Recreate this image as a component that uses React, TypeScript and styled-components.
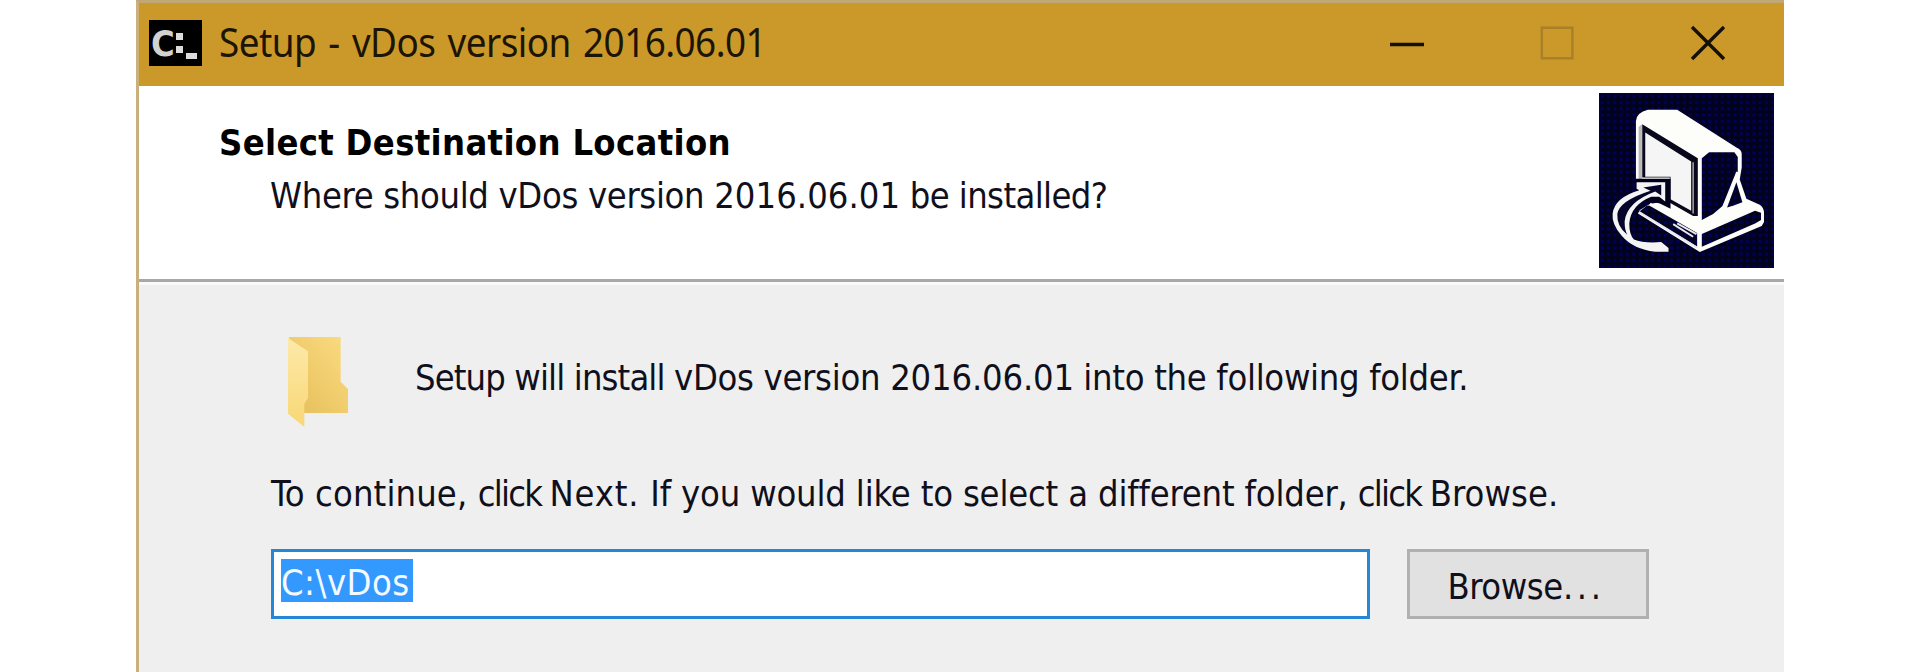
import React from 'react';
import styled, { createGlobalStyle } from 'styled-components';

const GlobalStyle = createGlobalStyle`
  body {
    margin: 0;
    background: #fff;
    color: #10101c;
    font: 36px/42px 'DejaVu Sans Condensed', 'DejaVu Sans', sans-serif;
  }
`;

const Page = styled.main`
  height: 672px;
  padding: 0 136px;
  box-sizing: border-box;
  overflow: hidden;
`;

const Window = styled.section`
  display: flex;
  flex-direction: column;
  height: 672px;
  box-sizing: border-box;
  border-top: 3px solid #bfa873;
  border-left: 3px solid #c9b07c;
`;

const TitleBar = styled.header`
  display: flex;
  align-items: flex-start;
  height: 83px;
  box-sizing: border-box;
  padding: 17px 58px 0 10px;
  background: #cb992a;
`;

const AppIcon = styled.svg`
  display: block;
  flex: none;
  width: 53px;
  height: 46px;
`;

const Title = styled.h1`
  flex: 1;
  margin: -5px 0 0 17px;
  font: 400 40px/54px 'Noto Sans', sans-serif;
  letter-spacing: -0.6px;
  word-spacing: 3.5px;
  color: #1c1404;
  white-space: nowrap;
  transform: scaleX(0.922);
  transform-origin: left;
`;

const WindowControls = styled.div`
  display: flex;
  gap: 114.5px;
  padding-top: 5px;
`;

const ControlIcon = styled.svg`
  display: block;
  width: 36px;
  height: 36px;
  fill: none;
`;

const Banner = styled.div`
  display: flex;
  justify-content: space-between;
  height: 193px;
  padding: 7px 10px 0 80px;
  box-sizing: border-box;
  background: #fff;
`;

const BannerText = styled.div`
  padding-top: 29px;
`;

const Heading = styled.h2`
  margin: 0;
  font-size: 36px;
  font-weight: 700;
  letter-spacing: 0.33px;
  white-space: nowrap;
  color: #000;
`;

const Line = styled.p<{ $track?: number; $indent?: number; $gap?: number }>`
  margin: ${(p) => p.$gap ?? 0}px 0 0 ${(p) => p.$indent ?? 0}px;
  letter-spacing: ${(p) => p.$track ?? 0}px;
  white-space: nowrap;
`;

const Tracked = styled.span<{ $track: number }>`
  letter-spacing: ${(p) => p.$track}px;
`;

const WizardImage = styled.svg`
  display: block;
  width: 175px;
  height: 175px;
`;

const Divider = styled.div`
  height: 3px;
  flex: none;
  background: #a8a8a8;
  border-bottom: 3px solid #fafafa;
`;

const Body = styled.div`
  flex: 1;
  padding: 52px 0 0 132px;
  background: #efefef;
`;

const FolderRow = styled.div`
  display: flex;
  align-items: flex-start;
  height: 90px;
  padding-left: 17px;
`;

const FolderIcon = styled.svg`
  display: block;
  width: 60px;
  height: 90px;
`;

const FieldRow = styled.div`
  display: flex;
  gap: 37px;
  margin-top: 34px;
`;

const PathField = styled.div`
  width: 1099px;
  height: 70px;
  box-sizing: border-box;
  padding: 7px 7px 0;
  border: 3px solid #2587d6;
  background: #fff;
`;

const Selection = styled.span`
  display: block;
  width: 132px;
  height: 43px;
  box-sizing: border-box;
  line-height: 48px;
  letter-spacing: 0.5px;
  color: #f4faff;
  background: #3399ff;
`;

const BrowseButton = styled.button`
  width: 242px;
  height: 70px;
  box-sizing: border-box;
  padding: 6px 4px 0 0;
  border: 3px solid #b0b0b0;
  background: #e1e1e1;
  color: inherit;
  font: inherit;
  letter-spacing: -0.4px;
`;

function InstallerArt() {
  return (
    <WizardImage viewBox="57 38 526 526">
      <defs>
        <pattern id="weave" x="57" y="38" width="19" height="19" patternUnits="userSpaceOnUse">
          <rect width="19" height="19" fill="#02021c" />
          <rect x="5" y="5" width="9" height="9" fill="#00005e" />
        </pattern>
      </defs>
      <rect x="57" y="38" width="526" height="526" fill="url(#weave)" />
      <rect x="59" y="40" width="522" height="522" fill="none" stroke="#00004e" strokeWidth="4" />
      {/* monitor shell */}
      <path d="M168 300V122Q170 96 204 88H292L470 202Q486 208 486 222V262L480 298L500 356L540 374Q553 382 553 400V426L546 438L360 516L174 400L180 390L210 372L270 360V300Z" fill="#fdfdfa" />
      <path d="M176 140L186 132V300H176Z" fill="#b9b9b9" />
      {/* screen frame and face */}
      <path d="M187 132L354 234V408L340 408L270 368V292H187Z" fill="#08081a" />
      <path d="M196 157L334 244V392L272 357V290H196Z" fill="#f5f5f5" />
      <path d="M340 246V400" stroke="#99999a" strokeWidth="5" />
      {/* side panel and stand */}
      <path d="M366 234L388 216H464L474 230V276L430 376L400 402L366 420Z" fill="url(#weave)" />
      <path d="M474 276L432 380" stroke="#fdfdfa" strokeWidth="9" />
      <path d="M470 306L488 366L462 376L442 382Z" fill="url(#weave)" />
      {/* base edges */}
      <path d="M366 462L526 392L544 398V420L526 430L366 500Z" fill="url(#weave)" />
      <path d="M200 378L218 374L352 458V500L178 394Z" fill="url(#weave)" />
      <path d="M178 396L352 503M280 432L340 470M292 430L350 462" stroke="#e8e8ee" strokeWidth="6" fill="none" />
      <path d="M210 372L360 458" stroke="#fdfdfa" strokeWidth="9" />
      {/* curved arrow */}
      <path d="M166 296H272V386L240 370L204 362L166 330Z" fill="#00001c" />
      <path d="M170 306H256V364L238 350H214Q153 374 148 430Q148 464 162 478Q190 490 244 486L266 504V515H226Q160 508 126 468Q94 432 98 400Q104 352 178 330L170 326Z" fill="#f4f4f4" />
      <path d="M190 322L244 314V346L226 334Q140 366 134 424Q134 450 142 464Q110 440 112 402Q118 362 212 332Z" fill="#05052c" />
    </WizardImage>
  );
}

function Folder() {
  return (
    <FolderIcon viewBox="85 82 180 270">
      <defs>
        <linearGradient id="back" x1="0" y1="1" x2="1" y2="0">
          <stop offset="0" stopColor="#e5bd58" />
          <stop offset="1" stopColor="#fbdc82" />
        </linearGradient>
        <linearGradient id="flap" x1="0" y1="0" x2="0" y2="1">
          <stop offset="0" stopColor="#fde9a9" />
          <stop offset="1" stopColor="#f8d775" />
        </linearGradient>
      </defs>
      <path d="M88 82H243V216L265 238V310H120L88 300Z" fill="url(#back)" />
      <path d="M85 85L145 125V265L134 282V352L85 312Z" fill="url(#flap)" />
    </FolderIcon>
  );
}

export default function App() {
  return (
    <Page>
      <GlobalStyle />
      <Window>
        <TitleBar>
          <AppIcon viewBox="0 0 53 46">
            <rect width="53" height="46" fill="#000" />
            <text x="2" y="36" fontSize="36" fontWeight="700" fill="#d2d2d2">C</text>
            <path d="M27 13h7v7h-7zM27 26h7v7h-7zM37 33h11v6h-11z" fill="#dcdcdc" />
          </AppIcon>
          <Title>Setup - vDos version 2016.06.01</Title>
          <WindowControls>
            <ControlIcon viewBox="0 0 36 36">
              <path d="M1 19.5H35" stroke="#141003" strokeWidth="3.6" />
            </ControlIcon>
            <ControlIcon viewBox="0 0 36 36">
              <path d="M1.8 2.8H32.4V33.2H1.8Z" stroke="#a98027" strokeWidth="2.4" />
            </ControlIcon>
            <ControlIcon viewBox="0 0 36 36">
              <path d="M2 2L34 34M34 2L2 34" stroke="#141003" strokeWidth="3.4" />
            </ControlIcon>
          </WindowControls>
        </TitleBar>
        <Banner>
          <BannerText>
            <Heading>Select Destination Location</Heading>
            <Line $indent={51} $gap={11} $track={-0.33}>
              Where should vDos version <Tracked $track={0.05}>2016.06.01</Tracked>
              <Tracked $track={-0.6}> be installed?</Tracked>
            </Line>
          </BannerText>
          <InstallerArt />
        </Banner>
        <Divider />
        <Body>
          <FolderRow>
            <Folder />
            <Line $indent={67} $gap={20} $track={-0.3}>
              <Tracked $track={-0.87}>Setup will install </Tracked>
              vDos version <Tracked $track={-0.15}>2016.06.01</Tracked>
              <Tracked $track={-1}> </Tracked>into the following folder.
            </Line>
          </FolderRow>
          <Line $gap={46} $track={-0.17}>
            <Tracked $track={0.12}>To continue, </Tracked>
            <Tracked $track={-1.8}>click </Tracked>
            <Tracked $track={0.8}>Next. </Tracked>
            If you would like to select a different folder,{' '}
            <Tracked $track={-1.8}>click </Tracked>
            <Tracked $track={0.1}>Browse.</Tracked>
          </Line>
          <FieldRow>
            <PathField>
              <Selection>C:\vDos</Selection>
            </PathField>
            <BrowseButton>
              Browse<Tracked $track={3.6}>...</Tracked>
            </BrowseButton>
          </FieldRow>
        </Body>
      </Window>
    </Page>
  );
}
